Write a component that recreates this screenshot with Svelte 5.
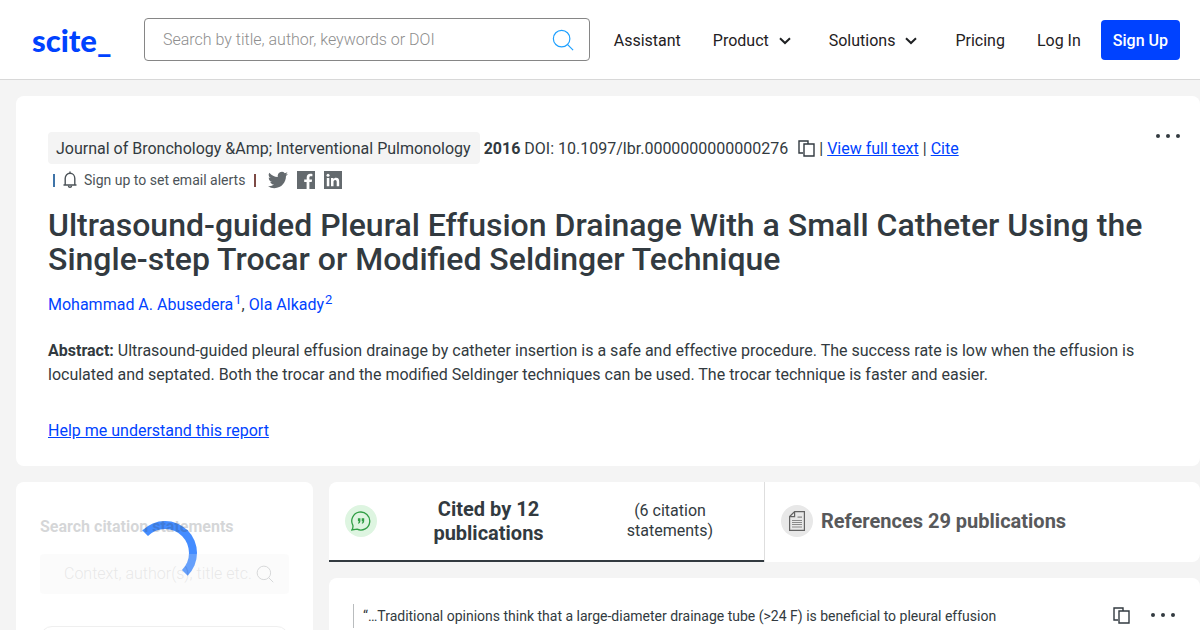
<script>
  let query = $state('');
  let statementQuery = $state('');

  const authors = [
    { name: 'Mohammad A. Abusedera', ref: 1 },
    { name: 'Ola Alkady', ref: 2 }
  ];
</script>

{#snippet searchIcon(size)}
  <svg viewBox="0 0 24 24" width={size} height={size} fill="none" stroke="currentColor" stroke-width="1.3" aria-hidden="true"><circle cx="10.5" cy="10.5" r="9" /><path d="M16.8 16.8 23 23" /></svg>
{/snippet}

{#snippet chevron()}
  <svg viewBox="0 0 12 8" width="12" height="8" fill="none" stroke="currentColor" stroke-width="2" aria-hidden="true"><path d="M1 1.2 6 6 11 1.2" /></svg>
{/snippet}

{#snippet copyIcon()}
  <svg viewBox="0 0 17 17" width="17" height="17" fill="none" stroke="currentColor" stroke-width="1.4" aria-hidden="true"><path d="M5 13H1V1h9v3" /><path d="M6 4h10v12H6z" /></svg>
{/snippet}

{#snippet dots()}
  <svg viewBox="0 0 26 6" width="26" height="6" fill="currentColor" aria-hidden="true"><circle cx="3" cy="3" r="2" /><circle cx="13" cy="3" r="2" /><circle cx="23" cy="3" r="2" /></svg>
{/snippet}

<div class="page">
  <header class="topbar">
    <a class="logo" href="/">scite_</a>
    <form class="search" role="search">
      <input type="text" bind:value={query} placeholder="Search by title, author, keywords or DOI" aria-label="Search" />
      <button type="submit" aria-label="Search">{@render searchIcon(22)}</button>
    </form>
    <nav>
      <a href="/assistant">Assistant</a>
      <button type="button">Product {@render chevron()}</button>
      <button type="button">Solutions {@render chevron()}</button>
      <a href="/pricing">Pricing</a>
      <a href="/login">Log In</a>
    </nav>
    <a class="signup" href="/register">Sign Up</a>
  </header>

  <main>
    <article class="card paper">
      <button class="more" type="button" aria-label="More options">{@render dots()}</button>
      <div class="meta">
        <span class="journal">Journal of Bronchology &amp;Amp; Interventional Pulmonology</span>
        <b>2016</b>
        <span>DOI: 10.1097/lbr.0000000000000276</span>
        <button class="copy" type="button" aria-label="Copy DOI">{@render copyIcon()}</button>
        <span>|</span>
        <a href="/view">View full text</a>
        <span>|</span>
        <a href="/cite">Cite</a>
      </div>
      <div class="share">
        <span class="bar bar-blue"></span>
        <button class="alerts" type="button">
          <svg viewBox="0 0 14 18" width="14" height="18" fill="none" stroke="currentColor" stroke-width="1.4" aria-hidden="true"><path d="M7 .5v1.7M.5 14h13M2.2 14V7.400C2.200 4.200 4.400 2.300 7 2.300s4.800 1.900 4.800 5.100V14" /><path d="M5.4 14.6c.2 2.400 3 2.400 3.200 0" /></svg>
          Sign up to set email alerts
        </button>
        <span class="bar bar-red"></span>
        <div class="social">
          <a href="/twitter" aria-label="Share on Twitter">
            <svg viewBox="0 0 24 24" width="20" height="20" fill="currentColor"><path d="M23.95 4.57a10 10 0 0 1-2.82.77 4.96 4.96 0 0 0 2.16-2.72c-.95.55-2 .95-3.13 1.18a4.92 4.92 0 0 0-8.38 4.48C7.69 8.1 4.07 6.13 1.64 3.16a4.92 4.92 0 0 0 1.52 6.57 4.9 4.9 0 0 1-2.23-.61v.06a4.92 4.92 0 0 0 3.95 4.83 5 5 0 0 1-2.21.08 4.94 4.94 0 0 0 4.6 3.42A9.87 9.87 0 0 1 0 19.54a14 14 0 0 0 7.55 2.21c9.05 0 14-7.5 14-13.98l-.02-.64a9.9 9.9 0 0 0 2.42-2.56z" /></svg>
          </a>
          <a href="/facebook" aria-label="Share on Facebook">
            <svg viewBox="0 0 18 18" width="18" height="18" fill="currentColor"><path d="M0 0h18v18h-5.6v-6.9h2.3l.4-2.7h-2.7V6.7c0-.8.3-1.4 1.4-1.4h1.6V2.9c-.3 0-1.1-.1-2.1-.1-2.1 0-3.6 1.3-3.6 3.6v2H7.2v2.7h2.4V18H0z" /></svg>
          </a>
          <a href="/linkedin" aria-label="Share on LinkedIn">
            <svg viewBox="0 0 18 18" width="18" height="18"><path fill="currentColor" d="M0 0h18v18H0z" /><path fill="#fff" d="M2.8 7h2.5v8.2H2.8zM7 7h2.4v1.2c.5-.8 1.4-1.4 2.600-1.4 2.500 0 3.200 1.600 3.200 3.900v4.500h-2.500v-4c0-1.200-.2-2.200-1.500-2.200s-1.700 1-1.700 2.200v4H7z" /><circle cx="4" cy="4.2" r="1.5" fill="#fff" /></svg>
          </a>
        </div>
      </div>
      <h1>Ultrasound-guided Pleural Effusion Drainage With a Small Catheter Using the Single-step Trocar or Modified Seldinger Technique</h1>
      <p class="authors">
        {#each authors as author, i}{i > 0 ? ', ' : ''}<a href="/authors/{author.ref}">{author.name}<sup>{author.ref}</sup></a>{/each}
      </p>
      <p class="abstract"><b>Abstract:</b> Ultrasound-guided pleural effusion drainage by catheter insertion is a safe and effective procedure. The success rate is low when the effusion is loculated and septated. Both the trocar and the modified Seldinger techniques can be used. The trocar technique is faster and easier.</p>
      <a class="help" href="/help">Help me understand this report</a>
    </article>

    <div class="columns">
      <aside class="card sidebar">
        <div class="spinner"></div>
        <div class="filters">
          <label for="statement-search">Search citation statements</label>
          <div class="field">
            <input id="statement-search" type="text" bind:value={statementQuery} placeholder="Context, author(s), title etc." />
            {@render searchIcon(18)}
          </div>
          <div class="group"></div>
        </div>
      </aside>

      <section class="results">
        <div class="tabs" role="tablist">
          <button class="tab active" type="button" role="tab" aria-selected="true">
            <span class="badge green">
              <svg viewBox="0 0 20 20" width="20" height="20" fill="none" stroke="currentColor" stroke-width="1.3" aria-hidden="true"><path d="M1.900 14.400A9 9 0 1 1 6 18.200L.8 19c.9-1.300 1.400-2.700 1.100-4.600z" /><path fill="currentColor" stroke="none" d="M6.900 7.300h2.500v2.400c0 1.500-.6 2.500-2.100 3l-.4-.7c.7-.4 1-.9 1-1.700h-1zM10.700 7.300h2.500v2.400c0 1.500-.6 2.500-2.100 3l-.4-.7c.7-.4 1-.9 1-1.700h-1z" /></svg>
            </span>
            <span class="tab-title">Cited by 12 publications</span>
            <span class="tab-note">(6 citation statements)</span>
          </button>
          <button class="tab" type="button" role="tab" aria-selected="false">
            <span class="badge grey">
              <svg viewBox="0 0 16 20" width="16" height="20" fill="none" stroke="currentColor" stroke-width="1.2" aria-hidden="true"><path d="M5.600.6h9.800v18.800H.6V5.600zM5.600.6v5h-5" /><path opacity=".7" d="M8.500 6.200h4.500M3 9.500h10M3 11.500h10M3 13.500h10M3 16h10" /></svg>
            </span>
            <span class="tab-title">References 29 publications</span>
          </button>
        </div>
        <div class="card statement">
          <blockquote>“…Traditional opinions think that a large-diameter drainage tube (&gt;24 F) is beneficial to pleural effusion</blockquote>
          <div class="actions">
            <button type="button" aria-label="Copy statement">{@render copyIcon()}</button>
            <button type="button" aria-label="More options">{@render dots()}</button>
          </div>
        </div>
      </section>
    </div>
  </main>
</div>

<style>
  :global(body) {
    background: #f4f4f4;
  }
  .page {
    height: 100vh;
    overflow: hidden;
    font-family: Roboto, 'Liberation Sans', sans-serif;
    font-size: 16px;
    line-height: 24px;
    color: #323a40;
  }
  a {
    color: #0042ff;
  }
  button {
    display: flex;
    align-items: center;
    padding: 0;
    border: none;
    background: none;
    font: inherit;
    color: inherit;
    cursor: pointer;
  }
  svg {
    display: block;
    flex-shrink: 0;
  }
  .card {
    background: #fff;
    border-radius: 8px;
  }

  .topbar {
    display: flex;
    align-items: center;
    height: 79px;
    padding: 0 20px 0 32px;
    background: #fff;
    border-bottom: 1px solid #d8d8d8;
    color: #1f2123;
  }
  .logo {
    width: 80px;
    margin-right: 32px;
    font-family: Lato, sans-serif;
    font-size: 31px;
    font-weight: 900;
    text-decoration: none;
  }
  .search {
    display: flex;
    align-items: center;
    flex: 1;
    height: 41px;
    padding: 0 15px 0 18px;
    border: 1px solid #868686;
    border-radius: 4px;
  }
  .search button {
    color: #1ea0ff;
  }
  input {
    flex: 1;
    min-width: 0;
    padding: 0;
    border: none;
    outline: none;
    background: none;
    font: inherit;
    font-weight: 300;
  }
  input::placeholder {
    color: #8e8e8e;
    opacity: 1;
  }
  nav {
    display: flex;
    gap: 32px;
    margin: 0 20px 0 24px;
    padding-top: 2px;
  }
  nav a {
    color: inherit;
    text-decoration: none;
  }
  nav button {
    gap: 10px;
    padding-right: 6px;
  }
  .signup {
    padding: 9px 12px 7px;
    border-radius: 4px;
    background: #0042ff;
    color: #fff;
    font-weight: 500;
    text-decoration: none;
  }

  main {
    padding: 16px 0 0 16px;
  }
  .paper {
    position: relative;
    padding: 36px 32px 23px;
  }
  .more {
    position: absolute;
    top: 37px;
    right: 19px;
  }
  .meta {
    display: flex;
    align-items: baseline;
    gap: 4px;
  }
  .journal {
    padding: 5px 9px 3px 8px;
    border-radius: 4px;
    background: #f4f4f4;
  }
  .copy {
    align-self: center;
    margin-left: 6px;
  }
  .share {
    display: flex;
    align-items: center;
    height: 32px;
    padding-left: 5px;
    font-size: 14px;
    color: #4c5358;
  }
  .bar {
    width: 2px;
    height: 13px;
  }
  .bar-blue {
    background: #3f74a8;
  }
  .bar-red {
    background: #7d4a45;
  }
  .alerts {
    gap: 7px;
    margin: 0 9px 0 8px;
  }
  .social {
    display: flex;
    align-items: center;
    gap: 9px;
    margin-left: 12px;
  }
  .social a {
    color: #646a6e;
  }
  h1 {
    margin: 12px 0 17px;
    font-size: 32px;
    font-weight: 500;
    line-height: 34px;
  }
  .authors,
  .abstract {
    margin: 0;
  }
  .authors {
    margin-bottom: 22px;
  }
  .authors a {
    text-decoration: none;
  }
  sup {
    margin-left: 1px;
    font-size: 13px;
    line-height: 0;
  }
  .abstract {
    margin-bottom: 32px;
  }
  .help {
    display: inline-block;
  }

  .columns {
    display: flex;
    align-items: flex-start;
    gap: 16px;
    margin-top: 16px;
  }
  .sidebar {
    position: relative;
    flex: 0 0 297px;
    box-sizing: border-box;
    min-width: 0;
    padding: 33px 24px 24px;
  }
  .spinner {
    position: absolute;
    top: 39px;
    left: 50%;
    width: 48px;
    height: 48px;
    margin-left: -32px;
    border: 8px solid transparent;
    border-top-color: #448cff;
    border-right-color: #448cff;
    border-radius: 50%;
  }
  .filters {
    position: relative;
    opacity: 0.2;
  }
  .filters label {
    display: block;
    margin-bottom: 15px;
    font-weight: 700;
  }
  .field {
    display: flex;
    align-items: center;
    height: 40px;
    padding: 0 15px 0 24px;
    border-radius: 4px;
    background: #f0f0f0;
  }
  .group {
    height: 200px;
    margin-top: 32px;
    border: 1px solid #b4b4b4;
    border-radius: 12px;
  }

  .results {
    flex: 1;
    min-width: 0;
  }
  .tabs {
    display: flex;
    height: 80px;
    overflow: hidden;
    border-radius: 8px 8px 8px 0;
    background: #fff;
  }
  .tab {
    flex: 1;
    gap: 8px;
    padding: 0 16px;
    color: #58595b;
  }
  .tab.active {
    justify-content: space-between;
    border-bottom: 2px solid #323a40;
    color: #323a40;
  }
  .tab + .tab {
    padding-bottom: 2px;
    border-left: 1px solid #dedede;
  }
  .tab-title {
    font-size: 20px;
    font-weight: 700;
  }
  .active .tab-title {
    max-width: 120px;
  }
  .tab-note {
    max-width: 140px;
    margin-right: 8px;
    line-height: 20px;
  }
  .badge {
    display: flex;
    align-items: center;
    justify-content: center;
    flex-shrink: 0;
    width: 32px;
    height: 32px;
    border-radius: 50%;
  }
  .green {
    background: #def5e1;
    color: #2f9e44;
  }
  .grey {
    background: #e8e8e8;
    color: #626262;
  }
  .statement {
    display: flex;
    justify-content: space-between;
    align-items: flex-start;
    margin-top: 16px;
    padding: 26px 24px 40px;
  }
  blockquote {
    margin: 0;
    padding-left: 9px;
    border-left: 1px solid #b9bcbe;
    font-size: 14px;
  }
  .actions {
    display: flex;
    gap: 20px;
    height: 22px;
  }
</style>
